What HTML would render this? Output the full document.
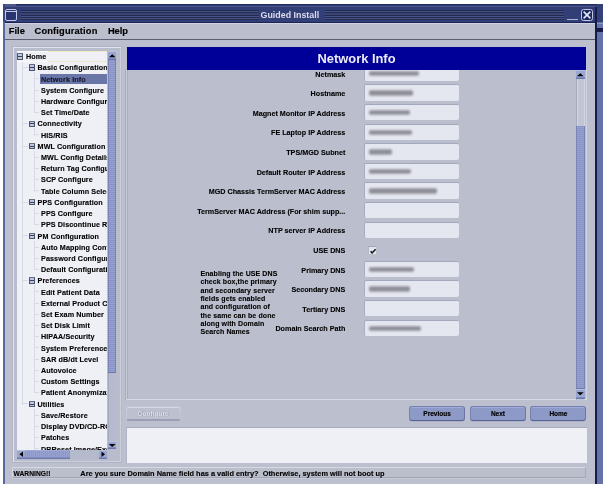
<!DOCTYPE html>
<html><head><meta charset="utf-8"><style>
*{margin:0;padding:0;box-sizing:border-box}
html,body{will-change:transform;width:606px;height:489px;background:#fff;overflow:hidden;font-family:"Liberation Sans",sans-serif;font-weight:bold}
.a{position:absolute}
#win{position:absolute;left:3px;top:4px;width:600px;height:479.5px;background:#bcc0ce}
#lb{position:absolute;left:3px;top:4px;width:1.5px;height:479.5px;background:#3a4680}
#title{position:absolute;left:3px;top:4px;width:600px;height:18.8px;background:#323e76;border-top:1px solid #222c5c;border-bottom:1.6px solid #1c2458}
.stripes{position:absolute;top:9.9px;height:10.4px;background:repeating-linear-gradient(#242a4e 0 1px,#3a4476 1px 1.4px,#46528a 1.4px 2.0px,#3a4476 2.0px 2.32px)}
#ttext{position:absolute;left:260.5px;top:10.3px;font-size:8.9px;color:#dcdcec;white-space:nowrap}
#wicon{position:absolute;left:5.2px;top:8.9px;width:11.6px;height:11.7px;border:1.6px solid #c4c8e6;border-radius:2px;background:#2a3470}
#wicon:before{content:"";position:absolute;left:0;top:1.2px;width:100%;height:1.3px;background:#c4c8e6}
#minb{position:absolute;left:567px;top:18.8px;width:11px;height:1.3px;background:#b0b6d8}
#closeb{position:absolute;left:581.2px;top:8.9px;width:11.9px;height:11.9px;border:1.4px solid #c4c8e6;border-radius:2.5px;background:#1e2860}
#rstrip{position:absolute;left:596.8px;top:4px;width:6.2px;height:479.5px;background:#6472aa}
#rdark{position:absolute;left:595.2px;top:6.5px;width:1.6px;height:477px;background:#161c44}
#menu{position:absolute;left:4.5px;top:22.8px;width:590.7px;height:17.6px;background:#babecd;border-top:1px solid #d0d4e0;border-bottom:1.2px solid #5c6070}
.mi{position:absolute;top:26px;font-size:9.3px;color:#000;-webkit-text-stroke:0.15px #000;white-space:nowrap}
#treep{position:absolute;left:12px;top:46.4px;width:109.6px;height:416.8px;border:1px solid #b0b4c4;border-right-color:#b6bac8;background:#b9bdcb;box-shadow:inset 1px 1px 0 #e2e5ee, inset -1px -1px 0 #ccd0dc}
#tree{position:absolute;left:16.9px;top:51.2px;width:89.7px;height:398.8px;background:#eef0f6;overflow:hidden}
.vl{position:absolute;width:1px;background:#d6dae6}
.hl{position:absolute;height:1px;background:#d6dae6}
.ic{position:absolute;width:6.2px;height:6.4px;border:1px solid #4c5468;border-top-color:#646c86;border-radius:0.5px;background:#bec6e8}
.ic:after{content:"";position:absolute;left:0;right:0;top:1.75px;height:0.9px;background:#3a4058}
.tt{position:absolute;font-size:7.2px;letter-spacing:0.1px;color:#000;-webkit-text-stroke:0.12px #000;white-space:nowrap;line-height:10px}
.selbg{position:absolute;width:70px;height:10.6px;background:#6a76a8}
.tt.sel{color:#1a1a30}
.vsb{position:absolute;background:#b4b9cc}
.thumb{position:absolute;border-bottom:1px solid #6c78a8;background:repeating-linear-gradient(#8894c6 0 1px,#97a1cf 1px 2px);box-shadow:inset 1px 0 0 #7a86b8, inset -1px 0 0 #7682b4}
.arr{position:absolute;background:#9ca6d2;box-shadow:inset 0 1px 0 #b8c0e0, inset 0 -1.5px 0 #6a78b0}
#header{position:absolute;left:127px;top:47px;width:459px;height:22.7px;background:#000099}
#htext{position:absolute;left:0;width:100%;top:3.9px;text-align:center;font-size:12.9px;color:#ececf8;white-space:nowrap}
#fclip{position:absolute;left:0;top:69.3px;width:576px;height:330px;overflow:hidden}
#formp{position:absolute;left:126px;top:69.3px;width:460.5px;height:331px;background:#bbbfcd;border-left:1px solid #c8ccd8;border-bottom:1px solid #d8dbe5;border-right:1px solid #d0d4de;box-shadow:-1px 0 0 #a8acbc, inset 1px 0 0 #a8acbc}
.lab{position:absolute;margin-top:0.6px;right:260.7px;font-size:7.2px;color:#000;-webkit-text-stroke:0.1px #000;white-space:nowrap;line-height:10px}
.tf{position:absolute;left:364.2px;width:95px;height:16.6px;background:#e4e6f0;border-radius:2px;border-top:1.8px solid #a4a8bc;border-left:1px solid #a8acc0}
.blur{position:absolute;left:3.6px;top:5.2px;height:5.4px;background:linear-gradient(#acacb4,#86868e 40%,#8e8e96 60%,#a8a8b0);filter:blur(0.9px);border-radius:2px}
.cb{position:absolute;left:368.4px;width:8px;height:7.8px;background:#e2e4ee;border-top:1px solid #a4a8bc;border-left:1px solid #b4b8c8}
.cb svg{position:absolute;left:0;top:0}
.info{position:absolute;left:200.4px;font-size:7px;letter-spacing:0.1px;color:#000;-webkit-text-stroke:0.1px #000;white-space:nowrap;line-height:10px}
.btn{position:absolute;top:405.7px;height:15.8px;background:#8d99c7;border-radius:3px;border:1px solid #7680b0;border-bottom:1.6px solid #58629a;border-right-color:#6a74a6;font-size:6.5px;color:#000;-webkit-text-stroke:0.15px #000;text-align:center;line-height:13px;box-shadow:inset 0 1px 0 #a2acd6, 0 0.5px 0 #a0a4b8}
.btn.dis{background:#bcc0cf;border-color:#c4c8d6;border-bottom:2px solid #9a9fb4;box-shadow:inset 0 1px 0 #d4d8e4;color:#e4e6ee;-webkit-text-stroke:0;text-shadow:0.3px 0.3px 0.8px #6a7088}
#msg{position:absolute;left:125.6px;top:427px;width:461.4px;height:36.4px;background:#eff0f5;border-top:1px solid #a8acbe;border-left:1px solid #b0b4c4}
#status{position:absolute;left:12px;top:467.2px;width:574.3px;height:10.5px;background:#bbbfcc;border:1px solid #d6d9e4;border-bottom-color:#a0a4b4;border-right-color:#a4a8b8;box-shadow:0 0.6px 0 #d0d3de}
.st{position:absolute;top:470px;font-size:7.4px;color:#000;-webkit-text-stroke:0.12px #000;white-space:pre;line-height:8px}
</style></head><body>
<div id="win"></div>
<div id="title"></div>
<div class="a" style="left:3.5px;top:4px;width:12px;height:1.5px;background:#50588a"></div>
<div class="a" style="left:4.5px;top:6px;width:591px;height:1px;background:#4a5488"></div>
<div class="stripes" style="left:21.3px;width:237.7px"></div>
<div class="stripes" style="left:325px;width:239px"></div>
<div id="ttext">Guided Install</div>
<div id="wicon"></div>
<div id="minb"></div>
<div id="closeb"><svg width="12" height="12" viewBox="0 0 12 12" style="position:absolute;left:-1.3px;top:-1.3px"><path d="M2.6 2.6L9.4 9.4M9.4 2.6L2.6 9.4" stroke="#e2e6f6" stroke-width="1.6"/></svg></div>
<div id="rstrip"></div>
<div class="a" style="left:596.8px;top:4px;width:6.2px;height:18px;background:#34407a"></div>
<div class="a" style="left:596.8px;top:22.5px;width:6.2px;height:1.5px;background:#8a96c6"></div>
<div class="a" style="left:596.8px;top:28.2px;width:6.2px;height:3.7px;background:#141a48"></div>
<div id="rdark"></div>
<div id="lb"></div>
<div class="a" style="left:3px;top:22px;width:1.5px;height:461.5px;background:#5a68a0"></div>
<div id="menu"></div>
<div class="mi" style="left:8.8px">File</div>
<div class="mi" style="left:34.6px;letter-spacing:0.15px">Configuration</div>
<div class="mi" style="left:107.9px">Help</div>

<div id="treep"></div>
<div id="tree">
<div class="a" style="left:0;top:0;width:31px;height:10.8px;border-top:1px solid #fbfbfd;border-bottom:1px solid #fbfbfd"></div><div class="a" style="left:31px;top:0;width:60px;height:10.8px;border-top:1px solid #eee8c6;border-bottom:1px solid #ece6c6"></div>
<div class="vl" style="left:5.2px;top:11.0px;height:342.5px"></div>
<div class="vl" style="left:17.2px;top:21.2px;height:40.8px"></div>
<div class="vl" style="left:17.2px;top:77.3px;height:7.2px"></div>
<div class="vl" style="left:17.2px;top:99.7px;height:40.8px"></div>
<div class="vl" style="left:17.2px;top:155.7px;height:18.4px"></div>
<div class="vl" style="left:17.2px;top:189.4px;height:29.6px"></div>
<div class="vl" style="left:17.2px;top:234.2px;height:108.1px"></div>
<div class="vl" style="left:17.2px;top:357.5px;height:61.3px"></div>
<div class="ic" style="left:0.3px;top:2.1px"></div>
<div class="tt" style="left:9.1px;top:1.0px">Home</div>
<div class="hl" style="left:5.7px;top:16.0px;width:5.5px"></div>
<div class="ic" style="left:12.0px;top:13.3px"></div>
<div class="tt" style="left:20.7px;top:12.2px">Basic Configuration</div>
<div class="hl" style="left:17.7px;top:27.2px;width:4.5px"></div>
<div class="selbg" style="left:23.2px;top:22.4px;"></div>
<div class="tt sel" style="left:24.1px;top:23.4px">Network Info</div>
<div class="hl" style="left:17.7px;top:38.4px;width:4.5px"></div>
<div class="tt" style="left:24.1px;top:34.6px">System Configure</div>
<div class="hl" style="left:17.7px;top:49.6px;width:4.5px"></div>
<div class="tt" style="left:24.1px;top:45.8px">Hardware Configure</div>
<div class="hl" style="left:17.7px;top:60.8px;width:4.5px"></div>
<div class="tt" style="left:24.1px;top:57.0px">Set Time/Date</div>
<div class="hl" style="left:5.7px;top:72.1px;width:5.5px"></div>
<div class="ic" style="left:12.0px;top:69.4px"></div>
<div class="tt" style="left:20.7px;top:68.3px">Connectivity</div>
<div class="hl" style="left:17.7px;top:83.3px;width:4.5px"></div>
<div class="tt" style="left:24.1px;top:79.5px">HIS/RIS</div>
<div class="hl" style="left:5.7px;top:94.5px;width:5.5px"></div>
<div class="ic" style="left:12.0px;top:91.8px"></div>
<div class="tt" style="left:20.7px;top:90.7px">MWL Configuration</div>
<div class="hl" style="left:17.7px;top:105.7px;width:4.5px"></div>
<div class="tt" style="left:24.1px;top:101.9px">MWL Config Details</div>
<div class="hl" style="left:17.7px;top:116.9px;width:4.5px"></div>
<div class="tt" style="left:24.1px;top:113.1px">Return Tag Configure</div>
<div class="hl" style="left:17.7px;top:128.1px;width:4.5px"></div>
<div class="tt" style="left:24.1px;top:124.3px">SCP Configure</div>
<div class="hl" style="left:17.7px;top:139.3px;width:4.5px"></div>
<div class="tt" style="left:24.1px;top:135.5px">Table Column Selection</div>
<div class="hl" style="left:5.7px;top:150.5px;width:5.5px"></div>
<div class="ic" style="left:12.0px;top:147.8px"></div>
<div class="tt" style="left:20.7px;top:146.7px">PPS Configuration</div>
<div class="hl" style="left:17.7px;top:161.7px;width:4.5px"></div>
<div class="tt" style="left:24.1px;top:157.9px">PPS Configure</div>
<div class="hl" style="left:17.7px;top:173.0px;width:4.5px"></div>
<div class="tt" style="left:24.1px;top:169.2px">PPS Discontinue Reason</div>
<div class="hl" style="left:5.7px;top:184.2px;width:5.5px"></div>
<div class="ic" style="left:12.0px;top:181.5px"></div>
<div class="tt" style="left:20.7px;top:180.4px">PM Configuration</div>
<div class="hl" style="left:17.7px;top:195.4px;width:4.5px"></div>
<div class="tt" style="left:24.1px;top:191.6px">Auto Mapping Configure</div>
<div class="hl" style="left:17.7px;top:206.6px;width:4.5px"></div>
<div class="tt" style="left:24.1px;top:202.8px">Password Configure</div>
<div class="hl" style="left:17.7px;top:217.8px;width:4.5px"></div>
<div class="tt" style="left:24.1px;top:214.0px">Default Configuration</div>
<div class="hl" style="left:5.7px;top:229.0px;width:5.5px"></div>
<div class="ic" style="left:12.0px;top:226.3px"></div>
<div class="tt" style="left:20.7px;top:225.2px">Preferences</div>
<div class="hl" style="left:17.7px;top:240.2px;width:4.5px"></div>
<div class="tt" style="left:24.1px;top:236.4px">Edit Patient Data</div>
<div class="hl" style="left:17.7px;top:251.4px;width:4.5px"></div>
<div class="tt" style="left:24.1px;top:247.6px">External Product Config</div>
<div class="hl" style="left:17.7px;top:262.6px;width:4.5px"></div>
<div class="tt" style="left:24.1px;top:258.8px">Set Exam Number</div>
<div class="hl" style="left:17.7px;top:273.8px;width:4.5px"></div>
<div class="tt" style="left:24.1px;top:270.0px">Set Disk Limit</div>
<div class="hl" style="left:17.7px;top:285.1px;width:4.5px"></div>
<div class="tt" style="left:24.1px;top:281.2px">HIPAA/Security</div>
<div class="hl" style="left:17.7px;top:296.3px;width:4.5px"></div>
<div class="tt" style="left:24.1px;top:292.5px">System Preferences</div>
<div class="hl" style="left:17.7px;top:307.5px;width:4.5px"></div>
<div class="tt" style="left:24.1px;top:303.7px">SAR dB/dt Level</div>
<div class="hl" style="left:17.7px;top:318.7px;width:4.5px"></div>
<div class="tt" style="left:24.1px;top:314.9px">Autovoice</div>
<div class="hl" style="left:17.7px;top:329.9px;width:4.5px"></div>
<div class="tt" style="left:24.1px;top:326.1px">Custom Settings</div>
<div class="hl" style="left:17.7px;top:341.1px;width:4.5px"></div>
<div class="tt" style="left:24.1px;top:337.3px">Patient Anonymization</div>
<div class="hl" style="left:5.7px;top:352.3px;width:5.5px"></div>
<div class="ic" style="left:12.0px;top:349.6px"></div>
<div class="tt" style="left:20.7px;top:348.5px">Utilities</div>
<div class="hl" style="left:17.7px;top:363.5px;width:4.5px"></div>
<div class="tt" style="left:24.1px;top:359.7px">Save/Restore</div>
<div class="hl" style="left:17.7px;top:374.7px;width:4.5px"></div>
<div class="tt" style="left:24.1px;top:370.9px">Display DVD/CD-ROM</div>
<div class="hl" style="left:17.7px;top:385.9px;width:4.5px"></div>
<div class="tt" style="left:24.1px;top:382.1px">Patches</div>
<div class="hl" style="left:17.7px;top:397.2px;width:4.5px"></div>
<div class="tt" style="left:24.1px;top:393.4px">DBReset Image/Exam</div>
</div>
<!-- tree v scrollbar -->
<div class="vsb" style="left:107.6px;top:50.6px;width:8.8px;height:399px;background:#b6bace;box-shadow:inset 1px 0 0 #a4a8bc"></div>
<div class="arr" style="left:107.9px;top:50.6px;width:8.5px;height:9px"><svg width="9" height="9" viewBox="0 0 9 9" style="position:absolute;left:0;top:0"><path d="M0.9 6.3 L4.25 3.3 L7.6 6.3Z" fill="#000"/></svg></div>
<div class="thumb" style="left:107.9px;top:60px;width:8.5px;height:313px"></div>
<div class="arr" style="left:107.9px;top:440.5px;width:8.5px;height:8.5px"><svg width="9" height="9" viewBox="0 0 9 9" style="position:absolute;left:0;top:0"><path d="M0.9 2.9 L4.25 5.9 L7.6 2.9Z" fill="#000"/></svg></div>
<!-- tree h scrollbar -->
<div class="vsb" style="left:16.9px;top:450px;width:90px;height:8.5px"></div>
<div class="arr" style="left:16.9px;top:450px;width:8.3px;height:8.5px"><svg width="9" height="9" viewBox="0 0 9 9" style="position:absolute;left:0;top:0"><path d="M6 1.5 L2.5 4.25 L6 7Z" fill="#000"/></svg></div>
<div class="thumb" style="left:25.2px;top:450px;width:44.5px;height:8.5px;background:repeating-linear-gradient(90deg,#8c98c8 0 1px,#96a1cf 1px 2px);box-shadow:inset 0 1px 0 #a0aad6, inset 0 -1px 0 #8490c0"></div>
<div class="arr" style="left:98.7px;top:450px;width:8.5px;height:8.5px"><svg width="9" height="9" viewBox="0 0 9 9" style="position:absolute;left:0;top:0"><path d="M2.5 1.5 L6 4.25 L2.5 7Z" fill="#000"/></svg></div>

<div id="formp"></div>
<div id="fclip"><div class="a" style="left:0;top:-69.3px;width:606px;height:489px"><div class="lab" style="top:69.0px">Netmask</div>
<div class="tf" style="top:64.7px"><div class="blur" style="width:50px"></div></div>
<div class="lab" style="top:88.6px">Hostname</div>
<div class="tf" style="top:84.3px"><div class="blur" style="width:44px"></div></div>
<div class="lab" style="top:108.2px">Magnet Monitor IP Address</div>
<div class="tf" style="top:103.9px"><div class="blur" style="width:41px"></div></div>
<div class="lab" style="top:127.8px">FE Laptop IP Address</div>
<div class="tf" style="top:123.5px"><div class="blur" style="width:43px"></div></div>
<div class="lab" style="top:147.4px">TPS/MGD Subnet</div>
<div class="tf" style="top:143.1px"><div class="blur" style="width:23px"></div></div>
<div class="lab" style="top:167.0px">Default Router IP Address</div>
<div class="tf" style="top:162.7px"><div class="blur" style="width:42px"></div></div>
<div class="lab" style="top:186.6px">MGD Chassis TermServer MAC Address</div>
<div class="tf" style="top:182.3px"><div class="blur" style="width:68px"></div></div>
<div class="lab" style="top:206.2px">TermServer MAC Address (For shim supp...</div>
<div class="tf" style="top:201.9px"></div>
<div class="lab" style="top:225.8px">NTP server IP Address</div>
<div class="tf" style="top:221.5px"></div>
<div class="lab" style="top:245.4px">USE DNS</div>
<div class="cb" style="top:245.9px"><svg width="8" height="8" viewBox="0 0 8 8"><path d="M1.6 4.3 L3.1 5.9 L6.6 2.2" stroke="#111" stroke-width="1.5" fill="none"/></svg></div>
<div class="lab" style="top:265.0px">Primary DNS</div>
<div class="tf" style="top:260.7px"><div class="blur" style="width:45px"></div></div>
<div class="lab" style="top:284.6px">Secondary DNS</div>
<div class="tf" style="top:280.3px"><div class="blur" style="width:41px"></div></div>
<div class="lab" style="top:304.2px">Tertiary DNS</div>
<div class="tf" style="top:299.9px"></div>
<div class="lab" style="top:323.8px">Domain Search Path</div>
<div class="tf" style="top:319.5px"><div class="blur" style="width:52px"></div></div>
<div class="info" style="top:269.0px">Enabling the USE DNS</div>
<div class="info" style="top:277.4px">check box,the primary</div>
<div class="info" style="top:285.7px">and secondary server</div>
<div class="info" style="top:294.1px">fields gets enabled</div>
<div class="info" style="top:302.4px">and configuration of</div>
<div class="info" style="top:310.8px">the same can be done</div>
<div class="info" style="top:319.1px">along with Domain</div>
<div class="info" style="top:327.4px">Search Names</div></div></div>
<div id="header"><div id="htext">Network Info</div></div>
<!-- form scrollbar -->
<div class="vsb" style="left:576.2px;top:69.5px;width:8.7px;height:330px;background:#c2c6d4;box-shadow:inset 1px 0 0 #a6aabb, inset 2px 0 0 #d2d6e0, inset -1px 0 0 #d2d6e0"></div>
<div class="arr" style="left:576.3px;top:69.5px;width:8.6px;height:9.3px"><svg width="9" height="9" viewBox="0 0 9 9" style="position:absolute;left:0;top:0"><path d="M0.9 6.3 L4.3 3.3 L7.7 6.3Z" fill="#000"/></svg></div>
<div class="thumb" style="left:576.3px;top:126px;width:8.6px;height:263px"></div>
<div class="arr" style="left:576.3px;top:389px;width:8.6px;height:10.3px"><svg width="9" height="9" viewBox="0 0 9 9" style="position:absolute;left:0;top:0"><path d="M0.9 3.3 L4.3 6.3 L7.7 3.3Z" fill="#000"/></svg></div>

<div class="btn dis" style="left:125.8px;width:54.8px">Configure</div>
<div class="btn" style="left:409.2px;width:55.8px">Previous</div>
<div class="btn" style="left:470.3px;width:55.3px">Next</div>
<div class="btn" style="left:530.4px;width:56.1px">Home</div>
<div id="msg"></div>
<div id="status"></div>
<div class="st" style="left:13.6px;font-size:6.7px">WARNING!!</div>
<div class="st" style="left:80.3px">Are you sure Domain Name field has a valid entry?  Otherwise, system will not boot up</div>
</body></html>
